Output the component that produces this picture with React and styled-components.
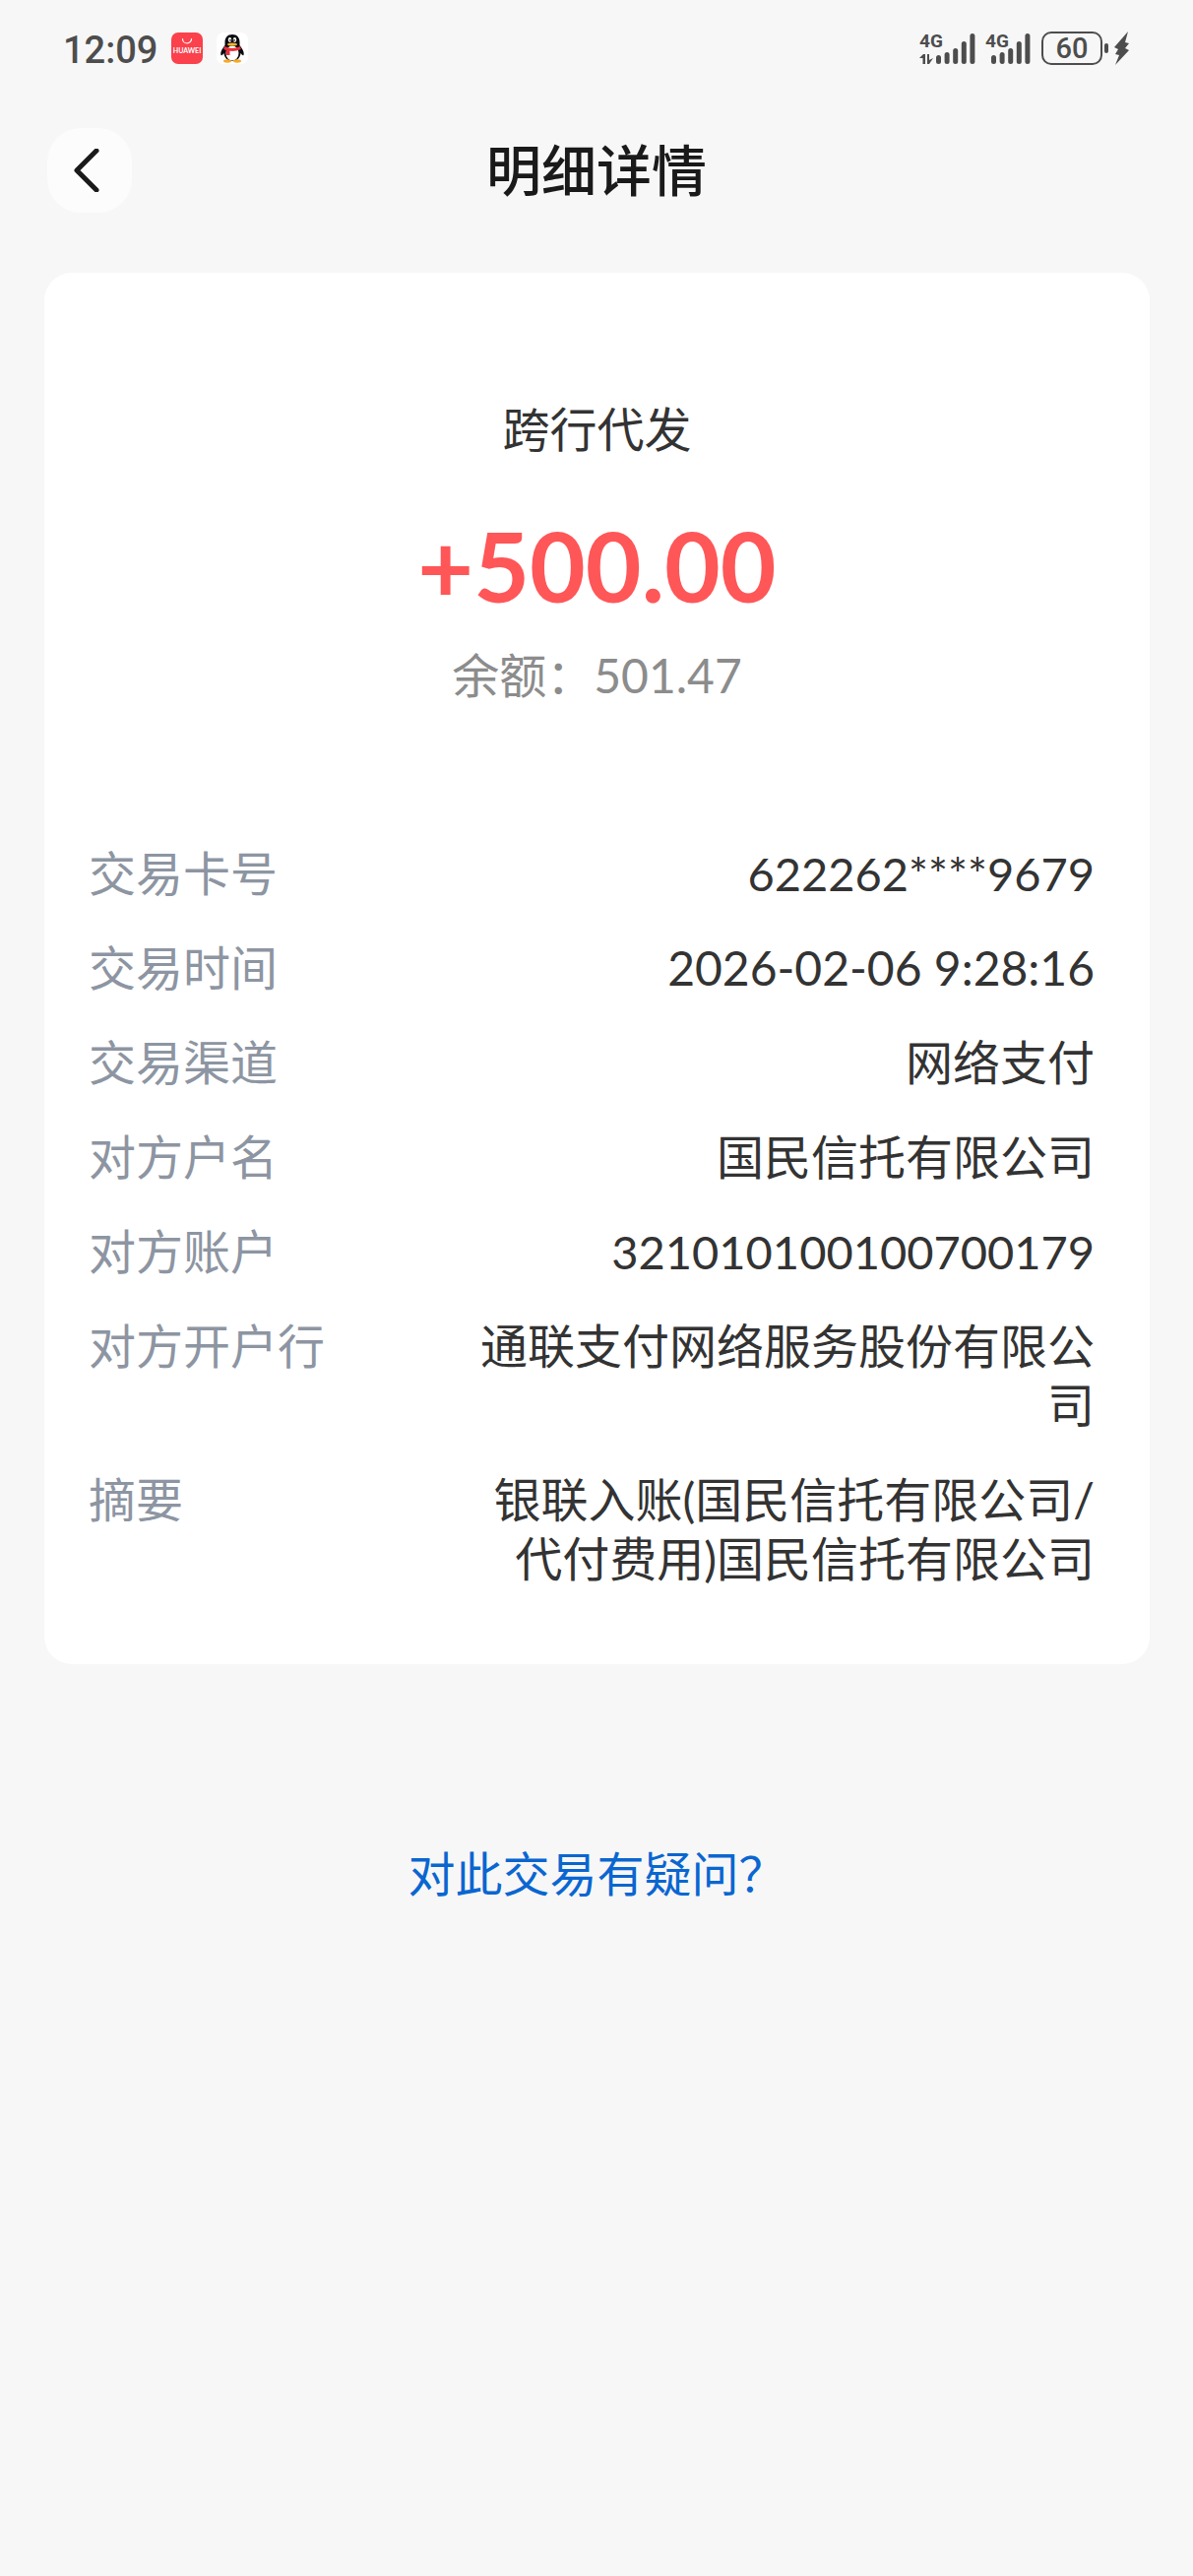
import React from 'react';
import styled, { createGlobalStyle } from 'styled-components';

const GlobalStyle = createGlobalStyle`
  * {
    box-sizing: border-box;
  }
  body {
    margin: 0;
    background: #f7f7f7;
    color: #333;
    font-family: Lato, 'Noto Sans CJK SC', sans-serif;
    font-size: 48px;
    line-height: 60px;
  }
`;

const Page = styled.div`
  min-height: 100vh;
  padding: 0 44px 0 45px;
`;

const StatusBar = styled.div`
  display: flex;
  justify-content: space-between;
  align-items: center;
  height: 98px;
  padding: 0 19px;
  color: #4d4d4d;
`;

const StatusGroup = styled.div`
  display: flex;
  align-items: center;
  gap: ${props => props.$gap}px;
`;

const Clock = styled.time`
  padding-top: 3px;
  font-family: Roboto, sans-serif;
  font-size: 38px;
  font-weight: 500;
`;

const Header = styled.header`
  display: grid;
  grid-template-columns: 86px 1fr 86px;
  align-items: center;
  padding: 32px 4px 61px 3px;
`;

const BackButton = styled.button`
  display: flex;
  align-items: center;
  justify-content: center;
  width: 86px;
  height: 86px;
  padding: 0;
  border: none;
  border-radius: 34px;
  background: #fcfcfc;
  cursor: pointer;
`;

const Title = styled.h1`
  margin: 0;
  color: #1a1a1a;
  font-size: 56px;
  font-weight: 500;
  text-align: center;
`;

const Card = styled.main`
  padding: 129px 56px 77px 45px;
  border-radius: 28px;
  background: #fff;
`;

const Summary = styled.section`
  display: flex;
  flex-direction: column;
  align-items: center;
  padding: 0 0 141px 11px;
`;

const Kind = styled.div`
  margin-bottom: 48px;
`;

const Amount = styled.div`
  margin-bottom: 22px;
  color: #ff5658;
  font-size: 98px;
  font-weight: 700;
  line-height: 120px;
`;

const Balance = styled.div`
  color: #8c8c8c;
`;

const Details = styled.dl`
  display: flex;
  flex-direction: column;
  gap: 36px;
  margin: 0;
`;

const Row = styled.div`
  display: flex;
  justify-content: space-between;
`;

const Label = styled.dt`
  color: #8d95a2;
`;

const Value = styled.dd`
  max-width: 63%;
  margin: 0;
  font-size: ${props => (props.$digits ? '47px' : '48px')};
  text-align: right;
`;

const Footer = styled.footer`
  padding: 183px 0;
  text-align: center;
`;

const HelpLink = styled.a`
  color: #0a66d0;
  text-decoration: none;
`;

const details = [
  { label: '交易卡号', value: '622262****9679', digits: true },
  { label: '交易时间', value: '2026-02-06 9:28:16' },
  { label: '交易渠道', value: '网络支付' },
  { label: '对方户名', value: '国民信托有限公司' },
  { label: '对方账户', value: '321010100100700179', digits: true },
  { label: '对方开户行', value: '通联支付网络服务股份有限公司' },
  { label: '摘要', value: '银联入账(国民信托有限公司/代付费用)国民信托有限公司' },
];

const StoreIcon = () => (
  <svg width="32" height="32" viewBox="0 0 32 32">
    <rect width="32" height="32" rx="7" fill="#fa414c" />
    <path d="M11.5 6.5a4.5 4.5 0 0 0 9 0" fill="none" stroke="#fff" strokeWidth="1.2" strokeLinecap="round" />
    <text x="16" y="21" fill="#fff" fontFamily="Lato, sans-serif" fontSize="7" fontWeight="700" textAnchor="middle">HUAWEI</text>
  </svg>
);

const PenguinIcon = () => (
  <svg width="32" height="32" viewBox="0 0 32 32">
    <rect width="32" height="32" rx="7" fill="#fff" />
    <path d="M16 2c-5 0-7.5 3.5-7.5 8v3C6 16 3.5 20 4.5 23c.6 1 2-.5 3-2 .4 5 4 8 8.5 8s8.100-3 8.500-8c1 1.500 2.400 3 3 2 1-3-1.500-7-4-10v-3c0-4.500-2.500-8-7.500-8z" fill="#0b0b10" />
    <ellipse cx="16" cy="21" rx="6.5" ry="7.5" fill="#fff" />
    <ellipse cx="11" cy="29" rx="4" ry="1.7" fill="#f7a922" />
    <ellipse cx="21" cy="29" rx="4" ry="1.7" fill="#f7a922" />
    <ellipse cx="13.5" cy="7.5" rx="1.7" ry="2.4" fill="#fff" />
    <ellipse cx="18.5" cy="7.5" rx="1.7" ry="2.4" fill="#fff" />
    <circle cx="14" cy="7.8" r=".9" fill="#111" />
    <circle cx="18" cy="7.8" r=".9" fill="#111" />
    <ellipse cx="16" cy="12" rx="5" ry="1.6" fill="#f7b52c" />
    <path d="M8 14c5 2.600 11 2.600 16 0l.8 3c-3.500 1.600-7.500 2.200-11.300 1.800V23h-3.800v-5L7.200 17z" fill="#e8303a" />
  </svg>
);

const SignalIcon = ({ transfer }) => {
  const start = transfer ? 17 : 6;
  const tops = [24, 21, 17, 10, 2];
  const width = transfer ? 58 : 47;
  return (
    <svg width={width} height="46" viewBox={`0 -6 ${width} 46`} fill="currentColor">
      <text x="0" y="16" fontFamily="Roboto, sans-serif" fontSize="19" fontWeight="700">4G</text>
      {transfer && <path d="M0 27l4-4h2v10H3.5v-6zM8 23h2v6l4-2-4 6H8z" />}
      {tops.map((top, i) => (
        <rect key={top} x={start + i * 8.6} y={top} width="5" height={33 - top} rx="2.5" />
      ))}
    </svg>
  );
};

const BatteryIcon = () => (
  <svg width="92" height="36" viewBox="0 0 92 36">
    <rect x="2" y="2" width="60" height="32" rx="9" fill="none" stroke="currentColor" strokeWidth="2" />
    <text x="32" y="28" fill="currentColor" fontFamily="Roboto, sans-serif" fontSize="29" fontWeight="500" textAnchor="middle">60</text>
    <rect x="65" y="13" width="4" height="10" rx="2" fill="currentColor" />
    <path d="M89 1L75 17l4 2-3 5 4 1-4 10 14-15-4-2 4-5-4-1z" fill="currentColor" />
  </svg>
);

const App = () => (
  <Page lang="zh-CN">
    <GlobalStyle />
    <StatusBar>
      <StatusGroup $gap={14}>
        <Clock>12:09</Clock>
        <StoreIcon />
        <PenguinIcon />
      </StatusGroup>
      <StatusGroup $gap={9}>
        <SignalIcon transfer />
        <SignalIcon />
        <BatteryIcon />
      </StatusGroup>
    </StatusBar>
    <Header>
      <BackButton type="button" aria-label="返回">
        <svg width="44" height="44" viewBox="0 0 44 44" fill="none" stroke="#1a1a1a" strokeWidth="5" strokeLinecap="round" strokeLinejoin="round">
          <path d="M29 2L9 22l20 20" />
        </svg>
      </BackButton>
      <Title>明细详情</Title>
    </Header>
    <Card>
      <Summary>
        <Kind>跨行代发</Kind>
        <Amount>+500.00</Amount>
        <Balance>余额：501.47</Balance>
      </Summary>
      <Details>
        {details.map(item => (
          <Row key={item.label}>
            <Label>{item.label}</Label>
            <Value $digits={item.digits}>{item.value}</Value>
          </Row>
        ))}
      </Details>
    </Card>
    <Footer>
      <HelpLink href="#help">对此交易有疑问？</HelpLink>
    </Footer>
  </Page>
);

export default App;
